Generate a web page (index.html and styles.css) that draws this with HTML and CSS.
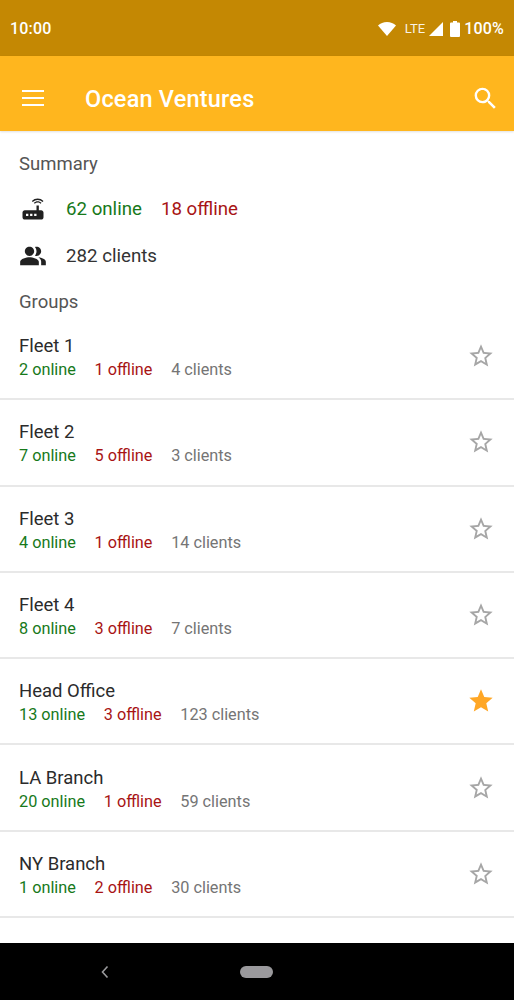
FILE: index.html
```html
<!DOCTYPE html>
<html lang="en">
<head>
<meta charset="utf-8">
<title>Ocean Ventures</title>
<link rel="stylesheet" href="styles.css">
</head>
<body>
<div class="phone">
  <div class="status">
    <span class="time">10:00</span>
    <div class="status-right">
      <svg class="wifi" viewBox="0 0 18 14" width="18" height="14"><path d="M0 3.6C2.4 1.4 5.5 0 9 0s6.600 1.400 9 3.600L9 14z" fill="#fff"/></svg>
      <span class="lte">LTE</span>
      <svg class="signal" viewBox="0 0 14 14" width="14" height="14"><path d="M14 0v14H0z" fill="#fff"/></svg>
      <svg class="battery" viewBox="0 0 10 16" width="10" height="16"><path d="M3 0h4v1.500h2a1 1 0 0 1 1 1V15a1 1 0 0 1-1 1H1a1 1 0 0 1-1-1V2.500a1 1 0 0 1 1-1h2z" fill="#fff"/></svg>
      <span class="pct">100%</span>
    </div>
  </div>
  <header class="appbar">
    <svg class="menu" viewBox="0 0 22 16" width="22" height="16"><path d="M0 0h22v2H0zM0 7h22v2H0zM0 14h22v2H0z" fill="#fff"/></svg>
    <h1 class="title">Ocean Ventures</h1>
    <svg class="search" viewBox="0 0 24 24" width="29" height="29"><path d="M15.500 14h-.79l-.28-.27A6.470 6.470 0 0 0 16 9.500 6.500 6.500 0 1 0 9.500 16c1.610 0 3.090-.59 4.230-1.570l.27.28v.79l5 4.990L20.490 19l-4.990-5zm-6 0C7.010 14 5 11.990 5 9.500S7.010 5 9.500 5 14 7.010 14 9.500 11.990 14 9.500 14z" fill="#fff"/></svg>
  </header>
  <main class="content">
    <div class="section-label summary-label">Summary</div>
    <div class="summary-row routers">
      <svg class="summary-icon" viewBox="0 0 24 24" width="28" height="28"><path d="M20.200 5.900l.8-.8C19.600 3.700 17.800 3 16 3s-3.600.7-5 2.100l.8.8C13 4.800 14.500 4.200 16 4.200s3 .6 4.200 1.700zm-.9.800c-.9-.9-2.100-1.400-3.300-1.400s-2.400.5-3.300 1.400l.8.8c.7-.7 1.600-1 2.500-1 .9 0 1.800.3 2.500 1l.8-.8zM19 13h-2V9h-2v4H5c-1.100 0-2 .9-2 2v4c0 1.100.9 2 2 2h14c1.100 0 2-.9 2-2v-4c0-1.100-.9-2-2-2zM8 18H6v-2h2v2zm3.500 0h-2v-2h2v2zm3.500 0h-2v-2h2v2z" fill="#212121"/></svg>
      <span class="on">62 online</span><span class="off">18 offline</span>
    </div>
    <div class="summary-row clients-row">
      <svg class="summary-icon" viewBox="0 0 24 24" width="28" height="28"><path d="M16.670 13.130C18.040 14.060 19 15.320 19 17v3h4v-3c0-2.180-3.570-3.470-6.330-3.870zM15 12c2.210 0 4-1.790 4-4s-1.790-4-4-4c-.47 0-.91.1-1.330.24C14.500 5.270 15 6.580 15 8s-.5 2.730-1.330 3.760c.42.140.86.240 1.330.240zM9 12c2.210 0 4-1.790 4-4s-1.790-4-4-4-4 1.790-4 4 1.790 4 4 4zm0 1c-2.670 0-8 1.340-8 4v3h16v-3c0-2.660-5.330-4-8-4z" fill="#212121"/></svg>
      <span class="total">282 clients</span>
    </div>
    <div class="section-label groups-label">Groups</div>
    <ul class="groups">
      <li class="group"><div class="info"><div class="name">Fleet 1</div><div class="stats"><span class="on">2 online</span><span class="off">1 offline</span><span class="cl">4 clients</span></div></div><svg class="star" viewBox="0 0 24 24" width="28" height="28"><path d="M22 9.240l-7.190-.62L12 2 9.190 8.630 2 9.240l5.460 4.730L5.820 21 12 17.270 18.180 21l-1.630-7.030L22 9.240zM12 15.400l-3.760 2.270 1-4.280-3.320-2.880 4.380-.38L12 6.100l1.710 4.040 4.380.38-3.320 2.880 1 4.280L12 15.400z"/></svg></li>
      <li class="group"><div class="info"><div class="name">Fleet 2</div><div class="stats"><span class="on">7 online</span><span class="off">5 offline</span><span class="cl">3 clients</span></div></div><svg class="star" viewBox="0 0 24 24" width="28" height="28"><path d="M22 9.240l-7.190-.62L12 2 9.190 8.630 2 9.240l5.460 4.730L5.820 21 12 17.270 18.180 21l-1.630-7.030L22 9.240zM12 15.400l-3.760 2.270 1-4.280-3.320-2.880 4.380-.38L12 6.100l1.710 4.040 4.380.38-3.320 2.880 1 4.280L12 15.400z"/></svg></li>
      <li class="group"><div class="info"><div class="name">Fleet 3</div><div class="stats"><span class="on">4 online</span><span class="off">1 offline</span><span class="cl">14 clients</span></div></div><svg class="star" viewBox="0 0 24 24" width="28" height="28"><path d="M22 9.240l-7.190-.62L12 2 9.190 8.630 2 9.240l5.460 4.730L5.820 21 12 17.270 18.180 21l-1.630-7.030L22 9.240zM12 15.400l-3.760 2.270 1-4.280-3.320-2.880 4.380-.38L12 6.100l1.710 4.040 4.380.38-3.320 2.880 1 4.280L12 15.400z"/></svg></li>
      <li class="group"><div class="info"><div class="name">Fleet 4</div><div class="stats"><span class="on">8 online</span><span class="off">3 offline</span><span class="cl">7 clients</span></div></div><svg class="star" viewBox="0 0 24 24" width="28" height="28"><path d="M22 9.240l-7.190-.62L12 2 9.190 8.630 2 9.240l5.460 4.730L5.820 21 12 17.270 18.180 21l-1.630-7.030L22 9.240zM12 15.400l-3.760 2.270 1-4.280-3.320-2.880 4.380-.38L12 6.100l1.710 4.040 4.380.38-3.320 2.880 1 4.280L12 15.400z"/></svg></li>
      <li class="group"><div class="info"><div class="name">Head Office</div><div class="stats"><span class="on">13 online</span><span class="off">3 offline</span><span class="cl">123 clients</span></div></div><svg class="star starred" viewBox="0 0 24 24" width="28" height="28"><path d="M12 17.270L18.180 21l-1.640-7.030L22 9.240l-7.190-.61L12 2 9.190 8.630 2 9.240l5.460 4.730L5.820 21z"/></svg></li>
      <li class="group"><div class="info"><div class="name">LA Branch</div><div class="stats"><span class="on">20 online</span><span class="off">1 offline</span><span class="cl">59 clients</span></div></div><svg class="star" viewBox="0 0 24 24" width="28" height="28"><path d="M22 9.240l-7.190-.62L12 2 9.190 8.630 2 9.240l5.460 4.730L5.820 21 12 17.270 18.180 21l-1.630-7.030L22 9.240zM12 15.400l-3.760 2.270 1-4.280-3.320-2.880 4.380-.38L12 6.100l1.710 4.040 4.380.38-3.320 2.880 1 4.280L12 15.400z"/></svg></li>
      <li class="group"><div class="info"><div class="name">NY Branch</div><div class="stats"><span class="on">1 online</span><span class="off">2 offline</span><span class="cl">30 clients</span></div></div><svg class="star" viewBox="0 0 24 24" width="28" height="28"><path d="M22 9.240l-7.190-.62L12 2 9.190 8.630 2 9.240l5.460 4.730L5.820 21 12 17.270 18.180 21l-1.630-7.030L22 9.240zM12 15.400l-3.760 2.270 1-4.280-3.320-2.880 4.380-.38L12 6.100l1.710 4.040 4.380.38-3.320 2.880 1 4.280L12 15.400z"/></svg></li>
    </ul>
  </main>
  <nav class="navbar">
    <svg class="back" viewBox="0 0 10 14" width="10" height="14"><path d="M7.500 1.500L2.500 7l5 5.500" fill="none" stroke="#9a9a9c" stroke-width="1.600"/></svg>
    <span class="pill"></span>
  </nav>
</div>
</body>
</html>
```
FILE: styles.css
```css
* { box-sizing: border-box; }
html, body { margin: 0; padding: 0; background: #fff; }
body { font-family: Roboto, "Liberation Sans", sans-serif; }
.phone { width: 514px; height: 1000px; display: flex; flex-direction: column; overflow: hidden; }

.status { height: 56px; flex: none; background: #c48803; color: #fff; display: flex; align-items: center; justify-content: space-between; padding: 1px 10px 0; }
.time { font-size: 16px; font-weight: 500; letter-spacing: 0.2px; }
.status-right { display: flex; align-items: center; }
.wifi { margin-right: 9px; }
.lte { font-size: 13px; margin-right: 4px; opacity: .9; }
.signal { margin-right: 7px; }
.battery { margin-right: 4px; }
.pct { font-size: 16px; font-weight: 500; letter-spacing: 0.2px; }

.appbar { height: 75px; flex: none; background: #ffb61e; display: flex; align-items: center; padding: 10px 14px 0 22px; box-shadow: 0 1px 2px rgba(0,0,0,.12); }
.menu { flex: none; margin-top: -1px; }
.title { flex: 1; margin: 0 0 0 41px; color: #fff; font-size: 23.500px; font-weight: 500; letter-spacing: 0.2px; }
.search { flex: none; margin-top: 0; }

.content { flex: 1; min-height: 0; overflow: hidden; color: #212121; }
.section-label { padding-left: 19px; font-size: 18.500px; line-height: 24px; color: #555; }
.summary-label { margin-top: 21px; }
.groups-label { margin-top: 11px; }
.summary-row { display: flex; align-items: center; height: 47px; padding-left: 19px; font-size: 18.700px; }
.routers { margin-top: 9px; }
.summary-icon { flex: none; margin-right: 19px; }
.summary-row .on { color: #17791a; margin-right: 19px; }
.summary-row .off { color: #a81414; }
.total { color: #333; }

.groups { list-style: none; margin: 0; padding: 0; }
.group { height: 86.300px; padding: 0 19px; border-bottom: 2px solid #e8e8e8; display: flex; align-items: center; justify-content: space-between; }
.info { padding-top: 4px; }
.name { font-size: 18.500px; line-height: 22px; color: #2b2b2b; }
.stats { font-size: 16.250px; line-height: 22px; margin-top: 2px; display: flex; gap: 18.700px; }
.stats .on { color: #17791a; }
.stats .off { color: #a81414; }
.stats .cl { color: #757575; }
.star { flex: none; fill: #a6a6a6; }
.starred { fill: #ffa726; }

.navbar { height: 57px; flex: none; background: #000; display: flex; align-items: center; padding-left: 100px; }
.back { flex: none; }
.pill { width: 33px; height: 12px; border-radius: 6px; background: #9a999c; margin-left: 130px; }
```
